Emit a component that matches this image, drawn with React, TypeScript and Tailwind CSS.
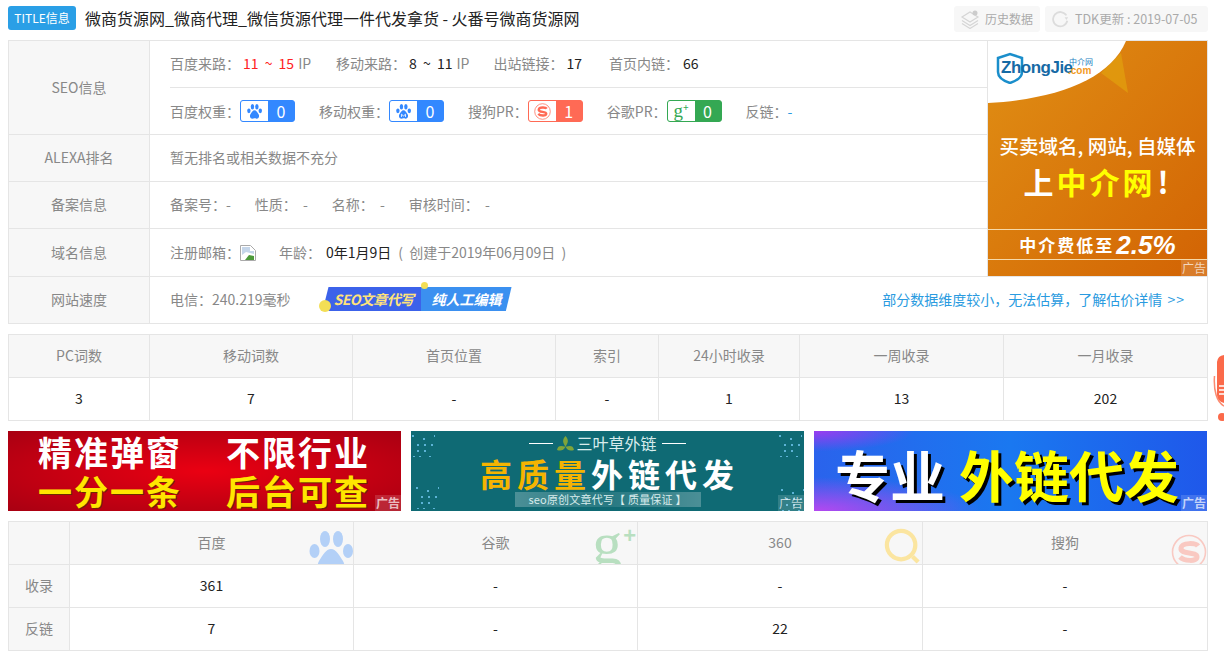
import React from 'react';

const font = '[font-family:"Noto_Sans_CJK_SC","Open_Sans",sans-serif]';

const Paw = ({ className, m }: { className?: string; m?: boolean }) => (
  <svg viewBox="0 0 44 44" className={className} fill="currentColor">
    <ellipse cx="5.5" cy="20" rx="5" ry="7" />
    <ellipse cx="16" cy="8" rx="5" ry="8" />
    <ellipse cx="29" cy="8" rx="5" ry="8" />
    <ellipse cx="39" cy="20" rx="5" ry="7" />
    <path d="M22 18c5 0 8 6 12 12 3 5 1 13-6 13-3 0-4-1-6-1s-3 1-6 1c-7 0-9-8-6-13 4-6 7-12 12-12z" />
    {m && <path d="M16 38v-8l6 5 6-5v8" fill="none" stroke="#fff" strokeWidth="2.5" />}
  </svg>
);

const SogouS = ({ className }: { className?: string }) => (
  <svg viewBox="0 0 36 36" className={className} fill="none" stroke="currentColor">
    <circle cx="18" cy="18" r="16.5" strokeWidth="1.6" />
    <path d="M27 12c-2-3-16-4-17 2-1 7 16 3 16 9 0 5-13 4-17 0" strokeWidth="5" />
  </svg>
);

const Badge = ({ color, value, children }: { color: string; value: string; children: React.ReactNode }) => (
  <span
    className={`inline-flex h-[22px] w-[55px] items-center overflow-hidden rounded-[3px] border ${color}`}
  >
    <span className="flex h-full w-[27px] items-center justify-center bg-white">{children}</span>
    <span className="flex-1 text-center text-[16px] leading-none text-white">{value}</span>
  </span>
);

const Label = ({ children }: { children: React.ReactNode }) => <span className="text-[#888]">{children}</span>;

const AdTag = () => (
  <span className="absolute right-0 bottom-0 flex h-[16px] w-[26px] items-center justify-center bg-white/15 text-[12px] leading-none text-white/70">
    广告
  </span>
);

const Dots = ({ className }: { className?: string }) => (
  <svg viewBox="0 0 24 24" className={className} fill="#5cb3d6">
    {[[1, 2], [12, 5], [23, 2], [6, 11], [13, 11], [20, 11], [6, 17], [13, 17], [2, 23], [8, 23], [18, 23]].map(([x, y], i) => (
      <rect key={i} x={x} y={y} width="2" height="2" />
    ))}
  </svg>
);

const metrics = [
  ['PC词数', '3'],
  ['移动词数', '7'],
  ['首页位置', '-'],
  ['索引', '-'],
  ['24小时收录', '1'],
  ['一周收录', '13'],
  ['一月收录', '202'],
];

const engines = [
  { name: '百度', rec: '361', back: '7' },
  { name: '谷歌', rec: '-', back: '-' },
  { name: '360', rec: '-', back: '22' },
  { name: '搜狗', rec: '-', back: '-' },
];

export default function App() {
  return (
    <div className={`relative h-[664px] w-[1224px] overflow-hidden bg-white pt-[6px] pr-4 pl-2 text-[14px] text-[#222] ${font}`}>
      {/* title bar */}
      <div className="flex h-[26px] items-start">
        <span className="flex h-[24px] w-[68px] items-center justify-center rounded-[3px] bg-[#2a9fe6] text-[12px] text-white">
          TITLE信息
        </span>
        <span className="ml-[9px] text-[16px] leading-[24px] text-[#222]">微商货源网_微商代理_微信货源代理一件代发拿货 - 火番号微商货源网</span>
        <div className="ml-auto flex gap-[5px] text-[12px] text-[#aaa]">
          <span className="flex h-[26px] w-[86px] items-center gap-[5px] rounded-[3px] bg-[#f7f7f7] pl-[6px]">
            <svg viewBox="0 0 20 20" className="h-[20px] w-[20px]" fill="none" stroke="#d5d5d5" strokeWidth="1.2">
              <path d="M2 8l8-5 8 5-8 5zM2 11.500l8 5 8-5M2 14.500l8 5 8-5" />
              <circle cx="15" cy="4" r="2.500" fill="#ccc" stroke="none" />
            </svg>
            历史数据
          </span>
          <span className="flex h-[26px] w-[163px] items-center gap-[5px] rounded-[3px] bg-[#f7f7f7] pl-[7px] text-[12.5px]">
            <svg viewBox="0 0 20 20" className="h-[18px] w-[18px]" fill="none" stroke="#dcdcdc" strokeWidth="2">
              <path d="M16 6a8 8 0 1 0 1 6" />
              <path d="M18 8l-2 3-2-3z" fill="#dcdcdc" stroke="none" />
            </svg>
            TDK更新 : 2019-07-05
          </span>
        </div>
      </div>

      {/* site info */}
      <div className="mt-2 border border-[#e5e5e5]">
        <div className="flex">
          <div className="flex-1">
            <div className="flex h-[93px]">
              <div className="flex w-[141px] items-center justify-center border-r border-[#e5e5e5] bg-[#f7f7f7] text-[#888]">SEO信息</div>
              <div className="flex-1 pl-5">
                <div className="flex h-[46px] items-center pb-[2px] [word-spacing:3px]">
                  <Label>百度来路：</Label>
                  <span className="ml-[3px] text-[#f22]">11 ~ 15</span>
                  <span className="ml-1 text-[#888]">IP</span>
                  <span className="ml-[25px]"><Label>移动来路：</Label></span>
                  <span className="ml-[3px]">8 ~ 11</span>
                  <span className="ml-1 text-[#888]">IP</span>
                  <span className="ml-6"><Label>出站链接：</Label></span>
                  <span className="ml-[3px]">17</span>
                  <span className="ml-[27px]"><Label>首页内链：</Label></span>
                  <span className="ml-[4px]">66</span>
                </div>
                <div className="flex h-[47px] items-center border-t border-[#e5e5e5]">
                  <Label>百度权重：</Label>
                  <Badge color="border-[#3388ff] bg-[#3388ff]" value="0">
                    <Paw className="h-[15px] w-[15px] text-[#3388ff]" />
                  </Badge>
                  <span className="ml-6"><Label>移动权重：</Label></span>
                  <Badge color="border-[#3388ff] bg-[#3388ff]" value="0">
                    <Paw m className="h-[15px] w-[15px] text-[#3388ff]" />
                  </Badge>
                  <span className="ml-6"><Label>搜狗PR：</Label></span>
                  <Badge color="border-[#ff6a55] bg-[#ff6a55]" value="1">
                    <SogouS className="h-[17px] w-[17px] text-[#ff6a55]" />
                  </Badge>
                  <span className="ml-6"><Label>谷歌PR：</Label></span>
                  <Badge color="border-[#34a853] bg-[#34a853]" value="0">
                    <span className="font-['Liberation_Serif'] text-[19px] leading-[18px] text-[#34a853]">g<sup className="top-[-6px] text-[10px] font-bold">+</sup></span>
                  </Badge>
                  <span className="ml-6"><Label>反链：</Label></span>
                  <span className="text-[#2a9be0]">-</span>
                </div>
              </div>
            </div>
            <div className="flex h-[47px] border-t border-[#e5e5e5]">
              <div className="flex w-[141px] items-center justify-center border-r border-[#e5e5e5] bg-[#f7f7f7] pb-[2px] text-[#888]">ALEXA排名</div>
              <div className="flex flex-1 items-center pb-[2px] pl-5 text-[#888]">暂无排名或相关数据不充分</div>
            </div>
            <div className="flex h-[47px] border-t border-[#e5e5e5]">
              <div className="flex w-[141px] items-center justify-center border-r border-[#e5e5e5] bg-[#f7f7f7] pb-[2px] text-[#888]">备案信息</div>
              <div className="flex flex-1 items-center gap-6 pb-[2px] pl-5 text-[#888] [word-spacing:3px]">
                <span>备案号：-</span>
                <span>性质： -</span>
                <span>名称： -</span>
                <span>审核时间： -</span>
              </div>
            </div>
            <div className="flex h-[48px] border-t border-[#e5e5e5]">
              <div className="flex w-[141px] items-center justify-center border-r border-[#e5e5e5] bg-[#f7f7f7] text-[#888]">域名信息</div>
              <div className="flex flex-1 items-center pl-5 text-[#888] [word-spacing:3px]">
                注册邮箱：
                <svg viewBox="0 0 16 16" className="mt-px h-4 w-4">
                  <path d="M.5.500h10l5 5v10H.500z" fill="#fff" stroke="#aaa" />
                  <path d="M2 2h8v4h4v3L6 7 2 10z" fill="#c5d6ea" />
                  <path d="M5 15l4-5 5 1v4z" fill="#4c9a3a" />
                </svg>
                <span className="ml-[23px]">年龄：</span>
                <span className="ml-[5px] text-[#222]">0年1月9日</span>
                <span className="ml-[7px]">( 创建于2019年06月09日 )</span>
              </div>
            </div>
          </div>

          {/* side ad */}
          <div className="relative flex h-[235px] w-[220px] flex-col items-center overflow-hidden border-l border-[#e5e5e5] bg-gradient-to-br from-[#e08f14] to-[#d26304] text-white">
            <svg viewBox="0 0 220 62" className="absolute top-0 left-0 h-[62px] w-[220px]">
              <path d="M113 32L133 12l7 40z" fill="#e3a70e" opacity=".6" />
              <path d="M0 0H138C122 38 70 58 0 62z" fill="#fff" />
            </svg>
            <svg viewBox="0 0 28 32" className="absolute top-[11px] left-[8px] h-[32px] w-[28px]" fill="none" stroke="#1a8ecb" strokeWidth="2.500">
              <path d="M2 6l12-4 12 4v14c0 6-6 9-12 11C8 29 2 26 2 20z" />
            </svg>
            <span className="absolute top-[15px] left-[13px] text-[17px] leading-[24px] font-bold tracking-[-0.5px] text-[#166aa5] [font-family:'Liberation_Sans',sans-serif]">
              ZhongJie
            </span>
            <span className="absolute top-[16px] left-[81px] text-[8px] leading-[9px] text-[#1a7fbf]">中介网</span>
            <span className="absolute top-[25px] left-[80px] text-[10px] leading-[10px] font-bold text-[#f39a1e] [font-family:'Liberation_Sans',sans-serif]">.com</span>

            <div className="mt-[92px] text-[19.5px] leading-[26px] font-medium whitespace-nowrap">买卖域名, 网站, 自媒体</div>
            <div className="mt-[2px] text-[30px] leading-[40px] font-bold tracking-[3px] whitespace-nowrap">
              上<span className="text-[#ff0]">中介网</span><span className="ml-[2px]">!</span>
            </div>
            <div className="mt-[28px] flex h-[31px] w-full items-center justify-center gap-[2px] border-y border-[#f6d9a8] font-bold">
              <span className="text-[17px] tracking-[2px]">中介费低至</span>
              <span className="text-[26px] leading-none italic [font-family:'Liberation_Sans',sans-serif]">2.5%</span>
            </div>
            <AdTag />
          </div>
        </div>

        <div className="flex h-[47px] border-t border-[#e5e5e5]">
          <div className="flex w-[141px] items-center justify-center border-r border-[#e5e5e5] bg-[#f7f7f7] pb-[2px] text-[#888]">网站速度</div>
          <div className="flex flex-1 items-center pr-[22px] pb-[2px] pl-5">
            <span className="text-[#888]">电信：240.219毫秒</span>
            <div className="relative ml-[32px]">
              <div className="flex h-[24px] w-[189px] items-center bg-gradient-to-r from-[#3c62ea] from-52% to-[#3b90f0] to-52% text-[14px] font-bold italic [clip-path:polygon(6px_0,100%_0,97%_100%,0_100%)]">
                <span className="ml-[11px] tracking-[-0.6px] text-[#ffe27a]">SEO文章代写</span>
                <span className="ml-[18px] text-white">纯人工编辑</span>
              </div>
              <span className="absolute bottom-[-1px] left-[-4px] h-[12px] w-[12px] rounded-full bg-[#f3de55]" />
              <span className="absolute top-[-5px] left-[98px] h-[7px] w-[7px] rounded-full bg-[#f3de55]" />
            </div>
            <span className="ml-auto text-[#2a9be0]">部分数据维度较小，无法估算，了解估价详情 <span className="ml-[2px] tracking-[1px]">&gt;&gt;</span></span>
          </div>
        </div>
      </div>

      {/* keyword stats */}
      <div className="mt-[10px] grid grid-cols-[140px_203px_203px_103px_141px_204px_1fr] border border-[#e5e5e5] text-center">
        {metrics.map(([head], i) => (
          <div key={head} className={`flex h-[42px] items-center justify-center bg-[#f7f7f7] pb-[2px] text-[#888] ${i > 0 ? 'border-l border-[#e5e5e5]' : ''}`}>
            {head}
          </div>
        ))}
        {metrics.map(([head, val], i) => (
          <div key={head} className={`flex h-[43px] items-center justify-center border-t border-[#e5e5e5] pb-[2px] ${i > 0 ? 'border-l' : ''}`}>
            {val}
          </div>
        ))}
      </div>

      {/* banners */}
      <div className="mt-[10px] flex gap-[10px]">
        <div className="relative h-[80px] w-[393px] overflow-hidden bg-[radial-gradient(ellipse_at_center,#ea0012_0%,#a80012_100%)] font-bold">
          <div className="grid grid-cols-[188px_1fr] pt-px pl-[30px] text-[34px] leading-[39px] tracking-[2px] whitespace-nowrap">
            <span className="text-white">精准弹窗</span>
            <span className="text-white">不限行业</span>
            <span className="text-[#ffe600] [text-shadow:1px_1px_0_#6b2b00]">一分一条</span>
            <span className="text-[#ffe600] [text-shadow:1px_1px_0_#6b2b00]">后台可查</span>
          </div>
          <AdTag />
        </div>

        <div className="relative flex h-[80px] w-[393px] flex-col items-center overflow-hidden bg-[#0f6a74] text-white">
          <Dots className="absolute top-[2px] left-0 h-6 w-6" />
          <Dots className="absolute bottom-[2px] left-[4px] h-6 w-6" />
          <Dots className="absolute top-[2px] right-[2px] h-6 w-6" />
          <Dots className="absolute right-0 bottom-0 h-6 w-6" />
          <div className="flex h-[24px] items-center gap-[2px] text-[16px] leading-none text-[#d8ecec]">
            <span className="mr-[2px] h-px w-[24px] bg-white" />
            <svg viewBox="0 0 16 14" className="h-[15px] w-[17px]" fill="#7fa43a">
              <path d="M8 10C3 9 1 9 0 13c3 1 6 1 8-3zM8 10c5-1 7-1 8 3-3 1-6 1-8-3zM8 10C5 6 5 3 8 0c3 3 3 6 0 10z" />
            </svg>
            三叶草外链
            <span className="ml-[3px] h-px w-[24px] bg-white" />
          </div>
          <div className="pl-[4px] text-[32px] leading-[36px] font-bold tracking-[5px] whitespace-nowrap">
            <span className="text-[#f5b400]">高质量</span>外链代发
          </div>
          <div className="mt-[1px] flex h-[15px] w-[186px] items-center justify-center bg-gradient-to-r from-white/25 via-white/10 to-white/25 text-[11px] leading-none tracking-[0.2px] text-[#d8ecec]">
            seo原创文章代写【 质量保证 】
          </div>
          <AdTag />
        </div>

        <div className="relative flex h-[80px] w-[393px] items-center gap-[14px] overflow-hidden bg-[radial-gradient(ellipse_at_0%_100%,#b548f0_0%,transparent_30%),radial-gradient(ellipse_at_0%_0%,#9a3cf0_0%,transparent_18%),linear-gradient(90deg,#2a63ec,#1a78f0_50%,#1f58ea)] pt-[4px] pl-[21px] font-bold whitespace-nowrap">
          <span className="text-[55px] leading-none text-white [text-shadow:3px_3px_0_#000]">专业</span>
          <span className="text-[55px] leading-none text-[#ff0] [text-shadow:3px_3px_0_#000]">外链代发</span>
          <AdTag />
        </div>
      </div>

      {/* engine table */}
      <div className="mt-[10px] grid grid-cols-[60px_284px_284px_285px_1fr] border border-[#e5e5e5] text-center">
        <div className="h-[42px] bg-[#f7f7f7]" />
        {engines.map((e, i) => (
          <div key={e.name} className="relative flex h-[42px] items-center justify-center overflow-hidden border-l border-[#e5e5e5] bg-[#f7f7f7] pb-[2px] text-[#888]">
            {e.name}
            {i === 0 && <Paw className="absolute right-0 bottom-[-11px] h-[44px] w-[44px] text-[#b3d0f7]" />}
            {i === 1 && (
              <span className="absolute right-[1px] bottom-[-2px] font-['Liberation_Serif'] text-[60px] leading-[46px] text-[#b8dfc0]">
                g<sup className="top-[-20px] ml-[1px] text-[22px] font-bold [font-family:'Liberation_Sans',sans-serif]">+</sup>
              </span>
            )}
            {i === 2 && (
              <svg viewBox="0 0 38 38" className="absolute right-0 bottom-0 h-[36px] w-[38px]" fill="none" stroke="#fbe5a0">
                <circle cx="17" cy="18" r="15" strokeWidth="4.500" />
                <path d="M29 30l6 6" strokeWidth="4.500" />
              </svg>
            )}
            {i === 3 && <SogouS className="absolute right-0 bottom-[-6px] h-[36px] w-[36px] text-[#f9c9c2]" />}
          </div>
        ))}
        <div className="flex h-[43px] items-center justify-center border-t border-[#e5e5e5] bg-[#f7f7f7] pb-[2px] text-[#888]">收录</div>
        {engines.map((e) => (
          <div key={e.name} className="flex h-[43px] items-center justify-center border-t border-l border-[#e5e5e5] pb-[2px]">{e.rec}</div>
        ))}
        <div className="flex h-[43px] items-center justify-center border-t border-[#e5e5e5] bg-[#f7f7f7] pb-[2px] text-[#888]">反链</div>
        {engines.map((e) => (
          <div key={e.name} className="flex h-[43px] items-center justify-center border-t border-l border-[#e5e5e5] pb-[2px]">{e.back}</div>
        ))}
      </div>

      {/* floating mic at the page edge */}
      <svg viewBox="0 0 14 70" className="absolute top-[354px] right-0 h-[70px] w-[14px]">
        <path d="M7 8a8 8 0 0 1 7-7v48a8 8 0 0 1-7-8z" fill="#fb6a4a" />
        <path d="M9 32h5M9 36h5M9 40h5" stroke="#fff" strokeWidth="1.500" />
        <path d="M4.500 22c-1 14 2 26 9.500 30" fill="none" stroke="#fb8a70" strokeWidth="1.500" />
        <circle cx="12" cy="63" r="4" fill="#fb6a4a" />
      </svg>
    </div>
  );
}
